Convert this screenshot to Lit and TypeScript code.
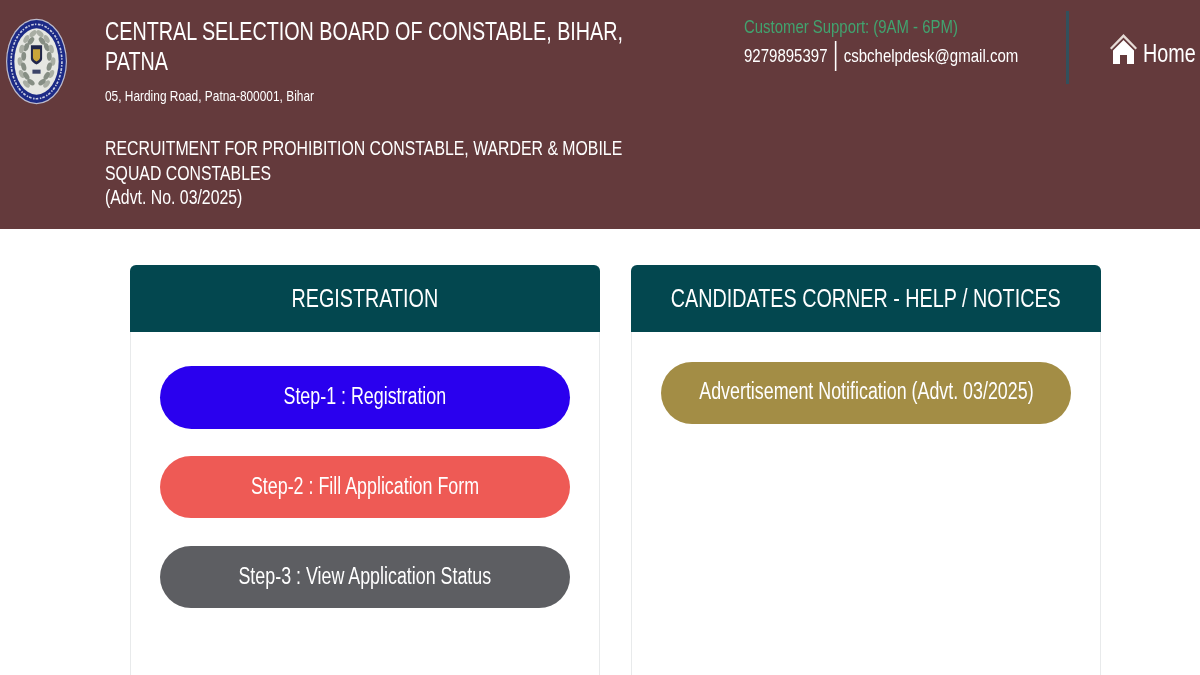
import { LitElement, html, css, svg } from "lit";
import { customElement } from "lit/decorators.js";

const leaves = (side: number) => {
  const out = [];
  for (let i = 0; i < 12; i++) {
    const a = (-78 + i * 13) * Math.PI / 180;
    const outer = i % 2 === 0 ? 1.08 : 0.86;
    const x = 30 + side * 15 * outer * Math.cos(a);
    const y = 42 + 26 * outer * Math.sin(a);
    out.push(svg`<ellipse cx=${x} cy=${y} rx="2.4" ry="4.2" fill=${i % 2 ? "#868e84" : "#a9aea4"} transform="rotate(${side * (i * 9 - 48)} ${x} ${y})"></ellipse>`);
  }
  return out;
};

@customElement("app-root")
export class AppRoot extends LitElement {
  static styles = css`
    :host { display: block; width: 1200px; height: 675px; overflow: hidden; background: #fff; font-family: "Liberation Sans", Arial, sans-serif; }
    .header { height: 229px; background: #643a3c; color: #fff; display: grid; grid-template-columns: 105px 639px 322px 1fr; }
    .logo { padding: 18px 0 0 6px; }
    .logo svg { display: block; filter: blur(.5px); }
    .info { padding-top: 16px; }
    .squeeze { transform-origin: left top; white-space: nowrap; }
    .org { font-size: 25px; line-height: 30px; transform: scaleX(.79); }
    .addr { font-size: 15px; line-height: 20px; margin-top: 10px; transform: scaleX(.793); }
    .rec { font-size: 20px; line-height: 24.5px; margin-top: 30px; transform: scaleX(.792); }
    .support { padding-top: 14px; }
    .cs { font-size: 19px; line-height: 26px; color: #41a36f; transform: scaleX(.785); }
    .contact { display: flex; width: max-content; align-items: center; height: 30px; margin-top: 1px; font-size: 19px; transform: scaleX(.79); }
    .bar { flex: none; width: 2.5px; height: 30px; background: #fff; margin: 0 9px 0 9px; }
    .home-col { display: flex; align-items: flex-start; margin-top: 11px; height: 73px; border-left: 3px solid #32505c; padding-left: 41px; box-sizing: border-box; }
    .home { display: flex; align-items: flex-start; margin-top: 23px; font-size: 25px; line-height: 32px; }
    .home svg { display: block; flex: none; }
    .home span { margin: 3px 0 0 6px; transform: scaleX(.79); transform-origin: left center; }
    .main { display: grid; grid-template-columns: 470px 470px; column-gap: 31px; padding: 36px 0 0 130px; }
    .panel { border: 1px solid #e8eaeb; border-top: 0; border-radius: 6px 6px 0 0; height: 440px; box-sizing: border-box; }
    .title { margin: 0 -1px; height: 67px; background: #03474f; border-radius: 6px 6px 0 0; color: #fff; font-size: 25px; display: flex; align-items: center; justify-content: center; }
    .title span { transform: scaleX(.79); white-space: nowrap; }
    .btn span { transform: scaleX(.776); white-space: nowrap; }
    .body { padding: 34px 29px 0; display: flex; flex-direction: column; }
    .body.tight { padding-top: 30px; }
    .btn { height: 62px; border-radius: 32px; color: #fff; font-size: 23px; display: flex; align-items: center; justify-content: center; padding-bottom: 1px; box-sizing: border-box; }
    .b1 { background: #2a00ee; height: 63px; margin-bottom: 27px; padding-bottom: 3px; }
    .b2 { background: #ee5a55; margin-bottom: 28px; }
    .b3 { background: #5d5e62; }
    .b4 { background: #a38d45; padding-bottom: 3px; }
  `;

  render() {
    return html`
      <div class="header">
        <div class="logo">
          <svg width="61" height="87" viewBox="0 0 60 84" aria-label="Central Selection Board of Constable seal">
            <ellipse cx="30" cy="42" rx="30" ry="42" fill="#bdbccd"></ellipse>
            <ellipse cx="30" cy="42" rx="28.8" ry="40.8" fill="#1c2a86"></ellipse>
            <ellipse cx="30" cy="42" rx="25" ry="36.6" fill="none" stroke="#c9cde2" stroke-width="1.6" stroke-dasharray="2.6 1.1 1.4 1.6"></ellipse>
            <ellipse cx="30" cy="42" rx="21.8" ry="32.6" fill="#e6e7e2"></ellipse>
            ${leaves(1)}${leaves(-1)}
            <path d="M24.5 26h11v13c0 3-3 4.5-5.500 6-2.500-1.500-5.500-3-5.500-6z" fill="#20264a"></path>
            <path d="M26.500 30h7v8c0 2-2 3-3.500 4-1.500-1-3.500-2-3.500-4z" fill="#c9a53a"></path>
            <rect x="26" y="50" width="8" height="4" fill="#3c4468"></rect>
          </svg>
        </div>
        <div class="info">
          <div class="org squeeze">CENTRAL SELECTION BOARD OF CONSTABLE, BIHAR,<br />PATNA</div>
          <div class="addr squeeze">05, Harding Road, Patna-800001, Bihar</div>
          <div class="rec squeeze">RECRUITMENT FOR PROHIBITION CONSTABLE, WARDER &amp; MOBILE<br />SQUAD CONSTABLES<br />(Advt. No. 03/2025)</div>
        </div>
        <div class="support">
          <div class="cs squeeze">Customer Support: (9AM - 6PM)</div>
          <div class="contact squeeze"><span>9279895397</span><i class="bar"></i><span>csbchelpdesk@gmail.com</span></div>
        </div>
        <div class="home-col">
          <div class="home">
            <svg width="27" height="30" viewBox="0 0 27 30">
              <path d="M13.500 0 L0 14 L1.500 15.500 L13.500 3.500 L25.500 15.500 L27 14 Z" fill="#e6dbd6"></path>
              <path d="M13.500 6 L3 16.500 V30 H10 V21 H17 V30 H24 V16.500 Z" fill="#fff"></path>
            </svg>
            <span>Home</span>
          </div>
        </div>
      </div>
      <div class="main">
        <section class="panel">
          <div class="title"><span>REGISTRATION</span></div>
          <div class="body">
            <div class="btn b1"><span>Step-1 : Registration</span></div>
            <div class="btn b2"><span>Step-2 : Fill Application Form</span></div>
            <div class="btn b3"><span>Step-3 : View Application Status</span></div>
          </div>
        </section>
        <section class="panel">
          <div class="title"><span>CANDIDATES CORNER - HELP / NOTICES</span></div>
          <div class="body tight">
            <div class="btn b4"><span>Advertisement Notification (Advt. 03/2025)</span></div>
          </div>
        </section>
      </div>
    `;
  }
}
